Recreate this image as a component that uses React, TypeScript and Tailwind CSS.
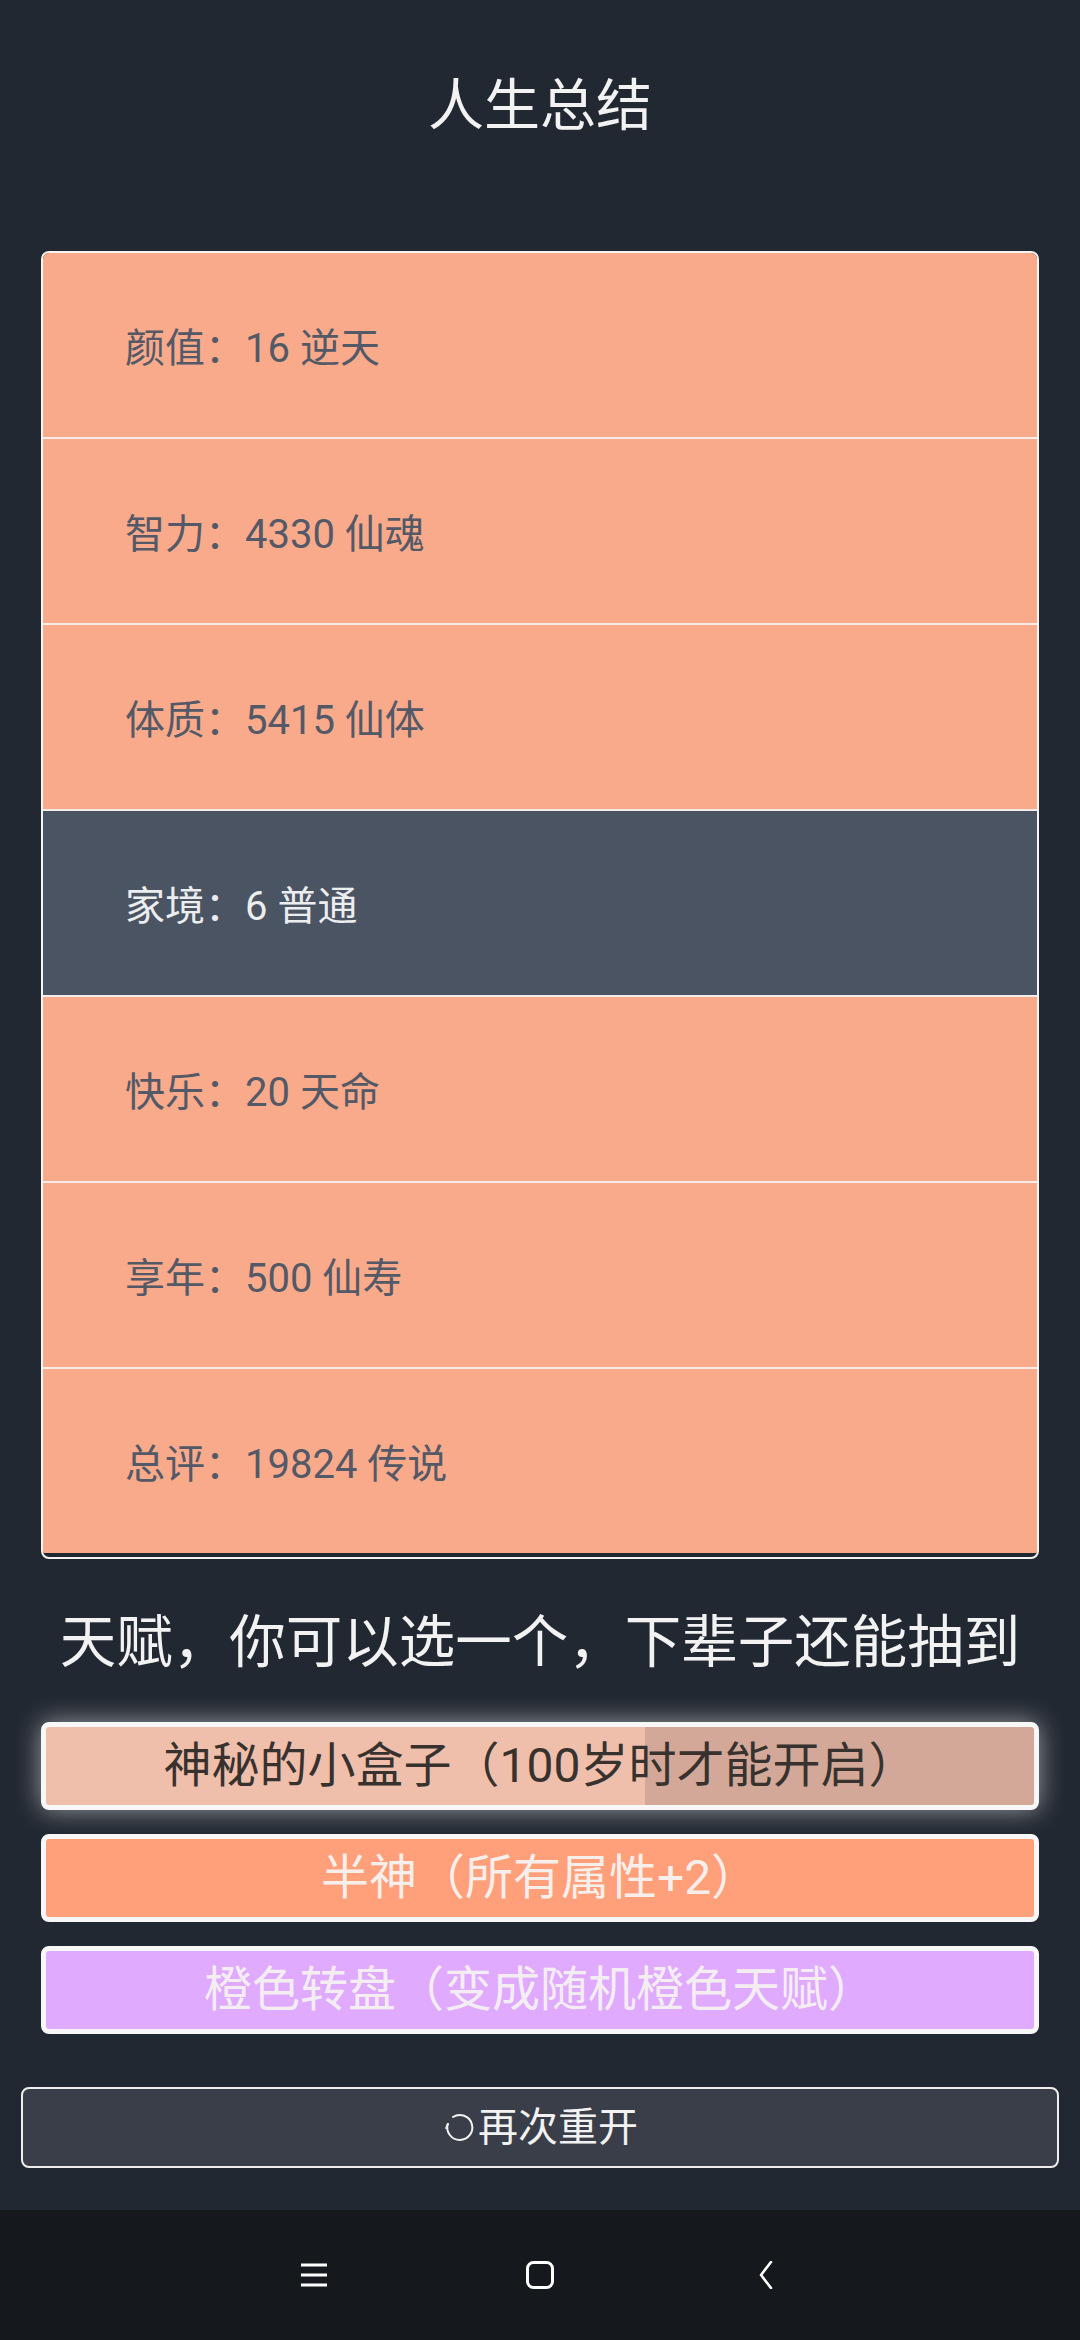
const stats = [
  { label: '颜值', value: '16 逆天', tone: 'orange' },
  { label: '智力', value: '4330 仙魂', tone: 'orange' },
  { label: '体质', value: '5415 仙体', tone: 'orange' },
  { label: '家境', value: '6 普通', tone: 'gray' },
  { label: '快乐', value: '20 天命', tone: 'orange' },
  { label: '享年', value: '500 仙寿', tone: 'orange' },
  { label: '总评', value: '19824 传说', tone: 'orange' },
]

function RestartIcon() {
  return (
    <svg width="34" height="32" viewBox="0 0 34 32" fill="none" className="mr-[2px]">
      <path
        d="M11 5 A12.5 12.5 0 1 1 5.8 12"
        stroke="#f2f2f2"
        strokeWidth="2"
        strokeLinecap="round"
      />
      <path d="M5.8 12 L4.2 16" stroke="#f2f2f2" strokeWidth="2" strokeLinecap="round" />
    </svg>
  )
}

function NavBar() {
  return (
    <div className="h-[130px] bg-[#15181d] flex items-center justify-center gap-[198px]">
      <svg width="28" height="24" viewBox="0 0 28 24" fill="none">
        <path d="M1 2h26M1 12h26M1 22h26" stroke="#fff" strokeWidth="3" />
      </svg>
      <svg width="28" height="28" viewBox="0 0 28 28" fill="none">
        <rect x="1.5" y="1.5" width="25" height="25" rx="6" stroke="#fff" strokeWidth="3" />
      </svg>
      <svg width="28" height="28" viewBox="0 0 28 28" fill="none">
        <path d="M19 1 L9 14 L19 27" stroke="#fff" strokeWidth="2.6" strokeLinecap="round" strokeLinejoin="round" />
      </svg>
    </div>
  )
}

export default function App() {
  return (
    <div className="w-[1080px] h-[2340px] bg-[#222831] flex flex-col font-['Roboto','Noto_Sans_CJK_SC',sans-serif]">
      <main className="flex-1 flex flex-col">
        <h1 className="pt-[64px] text-center text-[56px] leading-[84px] text-[#f2f2f2] font-normal">
          人生总结
        </h1>

        {/* property list */}
        <div className="mt-[103px] mx-[41px] border-2 border-[#f4f4f4] rounded-[8px] overflow-hidden pb-[4px]">
          {stats.map((s, i) => (
            <div
              key={s.label}
              className={
                (i > 0 ? 'border-t-2 border-[#f3ece8] ' : '') +
                (s.tone === 'gray'
                  ? 'bg-[#4a5463] text-[#ecedef] '
                  : 'bg-[#f8aa8b] text-[#535967] ') +
                'box-content h-[184px] flex items-center pl-[82px] text-[40px]'
              }
            >
              <span className="mt-[8px]">
                {s.label}：{s.value}
              </span>
            </div>
          ))}
        </div>

        <p className="mt-[42px] text-center text-[56.5px] leading-[84px] text-[#f2f2f2]">
          天赋，你可以选一个，下辈子还能抽到
        </p>

        <div className="mt-[37px] mx-[41px] flex flex-col gap-[24px]">
          <button className="h-[88px] border-[5px] border-[#f7f7f7] rounded-[8px] bg-[linear-gradient(to_right,#f0bfab_60.6%,#d3a898_60.6%)] text-[#38322f] text-[48px] shadow-[0_0_26px_rgba(255,255,255,0.55)] flex items-center justify-center">
            神秘的小盒子（100岁时才能开启）
          </button>
          <button className="h-[88px] border-[5px] border-[#f7f7f7] rounded-[8px] bg-[#ffa07a] text-[#f6efec] text-[48px] flex items-center justify-center">
            半神（所有属性+2）
          </button>
          <button className="h-[88px] border-[5px] border-[#f7f7f7] rounded-[8px] bg-[#e0aaff] text-[#f4eef3] text-[48px] flex items-center justify-center">
            橙色转盘（变成随机橙色天赋）
          </button>
        </div>

        <button className="mt-[53px] mx-[21px] h-[81px] border-2 border-[#eeeeee] rounded-[8px] bg-[#3a3e48] text-[#f2f2f2] text-[40px] flex items-center justify-center">
          <RestartIcon />
          再次重开
        </button>
      </main>
      <NavBar />
    </div>
  )
}
